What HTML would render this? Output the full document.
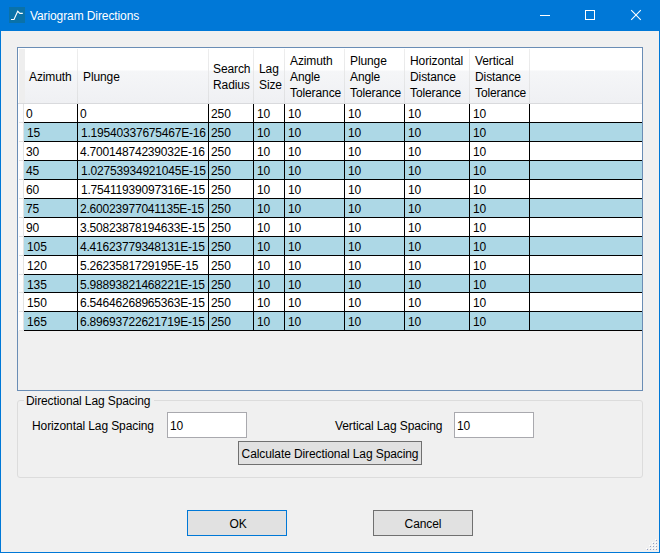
<!DOCTYPE html>
<html><head><meta charset="utf-8"><style>
*{margin:0;padding:0;box-sizing:border-box}
html,body{width:660px;height:553px;overflow:hidden;background:#F0F0F0}
body{position:relative;font-family:"Liberation Sans",sans-serif;font-size:12px;color:#000}
.a{position:absolute}
.t{position:absolute;white-space:nowrap;line-height:16px;letter-spacing:-0.1px;margin-top:1px}
</style></head><body>

<div class="a" style="left:0;top:0;width:660px;height:553px;border:1px solid #0078D7;border-top:0"></div>
<div class="a" style="left:0;top:0;width:660px;height:31px;background:#0078D7"></div>
<div class="a" style="left:9px;top:7px;width:16px;height:16px;background:#0A72A9"></div>
<svg class="a" style="left:0;top:0" width="40" height="31"><polyline points="11,19.5 14,19.5 17.7,11.3 19.9,13.4 22.8,13.4" fill="none" stroke="#fff" stroke-width="1.1"/></svg>
<div class="t" style="left:30px;top:7px;color:#fff">Variogram Directions</div>
<div class="a" style="left:540px;top:15px;width:10px;height:1px;background:#fff"></div>
<div class="a" style="left:585px;top:10px;width:10px;height:10px;border:1px solid #fff"></div>
<svg class="a" style="left:626px;top:5px" width="20" height="20"><path d="M5.2 5.2 L14.8 14.8 M14.8 5.2 L5.2 14.8" stroke="#fff" stroke-width="1.05" fill="none"/></svg>
<div class="a" style="left:17px;top:47px;width:626px;height:344px;border:1px solid #6A8DB5;background:#F0F0F0"></div>
<div class="a" style="left:18px;top:48px;width:624px;height:55px;background:linear-gradient(#FFFFFF 0px,#FFFFFF 22px,#F5F6F8 23px,#EFF0F3 55px)"></div>
<div class="a" style="left:18px;top:103px;width:624px;height:1px;background:#D9DADD"></div>
<div class="a" style="left:18px;top:48px;width:7px;height:55px;background:#EEEEEE;border-left:1px solid #fff;border-top:1px solid #fff"></div>
<div class="a" style="left:77px;top:49px;width:1px;height:54px;background:linear-gradient(#EEEEEE,#DFE0E2)"></div>
<div class="a" style="left:208px;top:49px;width:1px;height:54px;background:linear-gradient(#EEEEEE,#DFE0E2)"></div>
<div class="a" style="left:253px;top:49px;width:1px;height:54px;background:linear-gradient(#EEEEEE,#DFE0E2)"></div>
<div class="a" style="left:284px;top:49px;width:1px;height:54px;background:linear-gradient(#EEEEEE,#DFE0E2)"></div>
<div class="a" style="left:344px;top:49px;width:1px;height:54px;background:linear-gradient(#EEEEEE,#DFE0E2)"></div>
<div class="a" style="left:404px;top:49px;width:1px;height:54px;background:linear-gradient(#EEEEEE,#DFE0E2)"></div>
<div class="a" style="left:469px;top:49px;width:1px;height:54px;background:linear-gradient(#EEEEEE,#DFE0E2)"></div>
<div class="a" style="left:529px;top:49px;width:1px;height:54px;background:linear-gradient(#EEEEEE,#DFE0E2)"></div>
<div class="a" style="left:18px;top:104px;width:5px;height:227px;background:#FDFDFE"></div>
<div class="a" style="left:23px;top:104px;width:1px;height:227px;background:#E3E3E3"></div>
<div class="t" style="left:29px;top:68px">Azimuth</div>
<div class="t" style="left:83px;top:68px">Plunge</div>
<div class="t" style="left:213px;top:60px">Search<br>Radius</div>
<div class="t" style="left:259px;top:60px">Lag<br>Size</div>
<div class="t" style="left:290px;top:52px">Azimuth<br>Angle<br>Tolerance</div>
<div class="t" style="left:350px;top:52px">Plunge<br>Angle<br>Tolerance</div>
<div class="t" style="left:410px;top:52px">Horizontal<br>Distance<br>Tolerance</div>
<div class="t" style="left:475px;top:52px">Vertical<br>Distance<br>Tolerance</div>
<div class="a" style="left:24px;top:104px;width:618px;height:18px;background:#FFFFFF"></div>
<div class="a" style="left:24px;top:122px;width:618px;height:1px;background:#000"></div>
<div class="a" style="left:19px;top:122px;width:4px;height:1px;background:#E3E3E3"></div>
<div class="t" style="left:26px;top:105px">0</div>
<div class="t" style="left:80px;top:105px;letter-spacing:-0.2px">0</div>
<div class="t" style="left:211px;top:105px">250</div>
<div class="t" style="left:257px;top:105px">10</div>
<div class="t" style="left:288px;top:105px">10</div>
<div class="t" style="left:348px;top:105px">10</div>
<div class="t" style="left:408px;top:105px">10</div>
<div class="t" style="left:473px;top:105px">10</div>
<div class="a" style="left:24px;top:123px;width:618px;height:18px;background:#ADD8E6"></div>
<div class="a" style="left:24px;top:141px;width:618px;height:1px;background:#000"></div>
<div class="a" style="left:19px;top:141px;width:4px;height:1px;background:#E3E3E3"></div>
<div class="t" style="left:27px;top:124px">15</div>
<div class="t" style="left:81px;top:124px;letter-spacing:-0.2px">1.19540337675467E-16</div>
<div class="t" style="left:211px;top:124px">250</div>
<div class="t" style="left:257px;top:124px">10</div>
<div class="t" style="left:288px;top:124px">10</div>
<div class="t" style="left:348px;top:124px">10</div>
<div class="t" style="left:408px;top:124px">10</div>
<div class="t" style="left:473px;top:124px">10</div>
<div class="a" style="left:24px;top:142px;width:618px;height:18px;background:#FFFFFF"></div>
<div class="a" style="left:24px;top:160px;width:618px;height:1px;background:#000"></div>
<div class="a" style="left:19px;top:160px;width:4px;height:1px;background:#E3E3E3"></div>
<div class="t" style="left:26px;top:143px">30</div>
<div class="t" style="left:80px;top:143px;letter-spacing:-0.2px">4.70014874239032E-16</div>
<div class="t" style="left:211px;top:143px">250</div>
<div class="t" style="left:257px;top:143px">10</div>
<div class="t" style="left:288px;top:143px">10</div>
<div class="t" style="left:348px;top:143px">10</div>
<div class="t" style="left:408px;top:143px">10</div>
<div class="t" style="left:473px;top:143px">10</div>
<div class="a" style="left:24px;top:161px;width:618px;height:18px;background:#ADD8E6"></div>
<div class="a" style="left:24px;top:179px;width:618px;height:1px;background:#000"></div>
<div class="a" style="left:19px;top:179px;width:4px;height:1px;background:#E3E3E3"></div>
<div class="t" style="left:26px;top:162px">45</div>
<div class="t" style="left:81px;top:162px;letter-spacing:-0.2px">1.02753934921045E-15</div>
<div class="t" style="left:211px;top:162px">250</div>
<div class="t" style="left:257px;top:162px">10</div>
<div class="t" style="left:288px;top:162px">10</div>
<div class="t" style="left:348px;top:162px">10</div>
<div class="t" style="left:408px;top:162px">10</div>
<div class="t" style="left:473px;top:162px">10</div>
<div class="a" style="left:24px;top:180px;width:618px;height:18px;background:#FFFFFF"></div>
<div class="a" style="left:24px;top:198px;width:618px;height:1px;background:#000"></div>
<div class="a" style="left:19px;top:198px;width:4px;height:1px;background:#E3E3E3"></div>
<div class="t" style="left:26px;top:181px">60</div>
<div class="t" style="left:81px;top:181px;letter-spacing:-0.2px">1.75411939097316E-15</div>
<div class="t" style="left:211px;top:181px">250</div>
<div class="t" style="left:257px;top:181px">10</div>
<div class="t" style="left:288px;top:181px">10</div>
<div class="t" style="left:348px;top:181px">10</div>
<div class="t" style="left:408px;top:181px">10</div>
<div class="t" style="left:473px;top:181px">10</div>
<div class="a" style="left:24px;top:199px;width:618px;height:18px;background:#ADD8E6"></div>
<div class="a" style="left:24px;top:217px;width:618px;height:1px;background:#000"></div>
<div class="a" style="left:19px;top:217px;width:4px;height:1px;background:#E3E3E3"></div>
<div class="t" style="left:26px;top:200px">75</div>
<div class="t" style="left:80px;top:200px;letter-spacing:-0.2px">2.60023977041135E-15</div>
<div class="t" style="left:211px;top:200px">250</div>
<div class="t" style="left:257px;top:200px">10</div>
<div class="t" style="left:288px;top:200px">10</div>
<div class="t" style="left:348px;top:200px">10</div>
<div class="t" style="left:408px;top:200px">10</div>
<div class="t" style="left:473px;top:200px">10</div>
<div class="a" style="left:24px;top:218px;width:618px;height:18px;background:#FFFFFF"></div>
<div class="a" style="left:24px;top:236px;width:618px;height:1px;background:#000"></div>
<div class="a" style="left:19px;top:236px;width:4px;height:1px;background:#E3E3E3"></div>
<div class="t" style="left:26px;top:219px">90</div>
<div class="t" style="left:80px;top:219px;letter-spacing:-0.2px">3.50823878194633E-15</div>
<div class="t" style="left:211px;top:219px">250</div>
<div class="t" style="left:257px;top:219px">10</div>
<div class="t" style="left:288px;top:219px">10</div>
<div class="t" style="left:348px;top:219px">10</div>
<div class="t" style="left:408px;top:219px">10</div>
<div class="t" style="left:473px;top:219px">10</div>
<div class="a" style="left:24px;top:237px;width:618px;height:18px;background:#ADD8E6"></div>
<div class="a" style="left:24px;top:255px;width:618px;height:1px;background:#000"></div>
<div class="a" style="left:19px;top:255px;width:4px;height:1px;background:#E3E3E3"></div>
<div class="t" style="left:27px;top:238px">105</div>
<div class="t" style="left:80px;top:238px;letter-spacing:-0.2px">4.41623779348131E-15</div>
<div class="t" style="left:211px;top:238px">250</div>
<div class="t" style="left:257px;top:238px">10</div>
<div class="t" style="left:288px;top:238px">10</div>
<div class="t" style="left:348px;top:238px">10</div>
<div class="t" style="left:408px;top:238px">10</div>
<div class="t" style="left:473px;top:238px">10</div>
<div class="a" style="left:24px;top:256px;width:618px;height:18px;background:#FFFFFF"></div>
<div class="a" style="left:24px;top:274px;width:618px;height:1px;background:#000"></div>
<div class="a" style="left:19px;top:274px;width:4px;height:1px;background:#E3E3E3"></div>
<div class="t" style="left:27px;top:257px">120</div>
<div class="t" style="left:80px;top:257px;letter-spacing:-0.2px">5.2623581729195E-15</div>
<div class="t" style="left:211px;top:257px">250</div>
<div class="t" style="left:257px;top:257px">10</div>
<div class="t" style="left:288px;top:257px">10</div>
<div class="t" style="left:348px;top:257px">10</div>
<div class="t" style="left:408px;top:257px">10</div>
<div class="t" style="left:473px;top:257px">10</div>
<div class="a" style="left:24px;top:275px;width:618px;height:17px;background:#ADD8E6"></div>
<div class="a" style="left:24px;top:292px;width:618px;height:1px;background:#000"></div>
<div class="a" style="left:19px;top:292px;width:4px;height:1px;background:#E3E3E3"></div>
<div class="t" style="left:27px;top:276px">135</div>
<div class="t" style="left:80px;top:276px;letter-spacing:-0.2px">5.98893821468221E-15</div>
<div class="t" style="left:211px;top:276px">250</div>
<div class="t" style="left:257px;top:276px">10</div>
<div class="t" style="left:288px;top:276px">10</div>
<div class="t" style="left:348px;top:276px">10</div>
<div class="t" style="left:408px;top:276px">10</div>
<div class="t" style="left:473px;top:276px">10</div>
<div class="a" style="left:24px;top:293px;width:618px;height:18px;background:#FFFFFF"></div>
<div class="a" style="left:24px;top:311px;width:618px;height:1px;background:#000"></div>
<div class="a" style="left:19px;top:311px;width:4px;height:1px;background:#E3E3E3"></div>
<div class="t" style="left:27px;top:294px">150</div>
<div class="t" style="left:80px;top:294px;letter-spacing:-0.2px">6.54646268965363E-15</div>
<div class="t" style="left:211px;top:294px">250</div>
<div class="t" style="left:257px;top:294px">10</div>
<div class="t" style="left:288px;top:294px">10</div>
<div class="t" style="left:348px;top:294px">10</div>
<div class="t" style="left:408px;top:294px">10</div>
<div class="t" style="left:473px;top:294px">10</div>
<div class="a" style="left:24px;top:312px;width:618px;height:18px;background:#ADD8E6"></div>
<div class="a" style="left:24px;top:330px;width:618px;height:1px;background:#000"></div>
<div class="a" style="left:19px;top:330px;width:4px;height:1px;background:#E3E3E3"></div>
<div class="t" style="left:27px;top:313px">165</div>
<div class="t" style="left:80px;top:313px;letter-spacing:-0.2px">6.89693722621719E-15</div>
<div class="t" style="left:211px;top:313px">250</div>
<div class="t" style="left:257px;top:313px">10</div>
<div class="t" style="left:288px;top:313px">10</div>
<div class="t" style="left:348px;top:313px">10</div>
<div class="t" style="left:408px;top:313px">10</div>
<div class="t" style="left:473px;top:313px">10</div>
<div class="a" style="left:77px;top:104px;width:1px;height:227px;background:#000"></div>
<div class="a" style="left:208px;top:104px;width:1px;height:227px;background:#000"></div>
<div class="a" style="left:253px;top:104px;width:1px;height:227px;background:#000"></div>
<div class="a" style="left:284px;top:104px;width:1px;height:227px;background:#000"></div>
<div class="a" style="left:344px;top:104px;width:1px;height:227px;background:#000"></div>
<div class="a" style="left:404px;top:104px;width:1px;height:227px;background:#000"></div>
<div class="a" style="left:469px;top:104px;width:1px;height:227px;background:#000"></div>
<div class="a" style="left:529px;top:104px;width:1px;height:227px;background:#000"></div>
<div class="a" style="left:17px;top:400px;width:626px;height:78px;border:1px solid #DCDCDC;border-radius:3px"></div>
<div class="a" style="left:24px;top:396px;width:130px;height:8px;background:#F0F0F0"></div>
<div class="t" style="left:26px;top:392px">Directional Lag Spacing</div>
<div class="t" style="left:32px;top:417px">Horizontal Lag Spacing</div>
<div class="a" style="left:167px;top:412px;width:80px;height:26px;border:1px solid #A9A9AE;background:#fff"></div>
<div class="t" style="left:170px;top:417px">10</div>
<div class="t" style="left:335px;top:417px">Vertical Lag Spacing</div>
<div class="a" style="left:454px;top:412px;width:80px;height:26px;border:1px solid #A9A9AE;background:#fff"></div>
<div class="t" style="left:457px;top:417px">10</div>
<div class="a" style="left:238px;top:441px;width:184px;height:24px;border:1px solid #707070;background:#E1E1E1"></div>
<div class="t" style="left:238px;top:445px;width:184px;text-align:center">Calculate Directional Lag Spacing</div>
<div class="a" style="left:187px;top:510px;width:100px;height:26px;border:1px solid #0078D7;background:#E1E1E1"></div>
<div class="t" style="left:188px;top:515px;width:100px;text-align:center">OK</div>
<div class="a" style="left:373px;top:510px;width:100px;height:26px;border:1px solid #707070;background:#E1E1E1"></div>
<div class="t" style="left:373px;top:515px;width:100px;text-align:center">Cancel</div>
<div class="a" style="left:655px;top:539px;width:1px;height:1px;background:#FFFFFF"></div>
<div class="a" style="left:656px;top:540px;width:1px;height:1px;background:#94A0C4"></div>
<div class="a" style="left:652px;top:542px;width:1px;height:1px;background:#FFFFFF"></div>
<div class="a" style="left:653px;top:543px;width:1px;height:1px;background:#94A0C4"></div>
<div class="a" style="left:655px;top:542px;width:1px;height:1px;background:#FFFFFF"></div>
<div class="a" style="left:656px;top:543px;width:1px;height:1px;background:#94A0C4"></div>
<div class="a" style="left:649px;top:545px;width:1px;height:1px;background:#FFFFFF"></div>
<div class="a" style="left:650px;top:546px;width:1px;height:1px;background:#94A0C4"></div>
<div class="a" style="left:652px;top:545px;width:1px;height:1px;background:#FFFFFF"></div>
<div class="a" style="left:653px;top:546px;width:1px;height:1px;background:#94A0C4"></div>
<div class="a" style="left:655px;top:545px;width:1px;height:1px;background:#FFFFFF"></div>
<div class="a" style="left:656px;top:546px;width:1px;height:1px;background:#94A0C4"></div>
<div class="a" style="left:646px;top:548px;width:1px;height:1px;background:#FFFFFF"></div>
<div class="a" style="left:647px;top:549px;width:1px;height:1px;background:#94A0C4"></div>
<div class="a" style="left:649px;top:548px;width:1px;height:1px;background:#FFFFFF"></div>
<div class="a" style="left:650px;top:549px;width:1px;height:1px;background:#94A0C4"></div>
<div class="a" style="left:652px;top:548px;width:1px;height:1px;background:#FFFFFF"></div>
<div class="a" style="left:653px;top:549px;width:1px;height:1px;background:#94A0C4"></div>
<div class="a" style="left:655px;top:548px;width:1px;height:1px;background:#FFFFFF"></div>
<div class="a" style="left:656px;top:549px;width:1px;height:1px;background:#94A0C4"></div>
</body></html>
